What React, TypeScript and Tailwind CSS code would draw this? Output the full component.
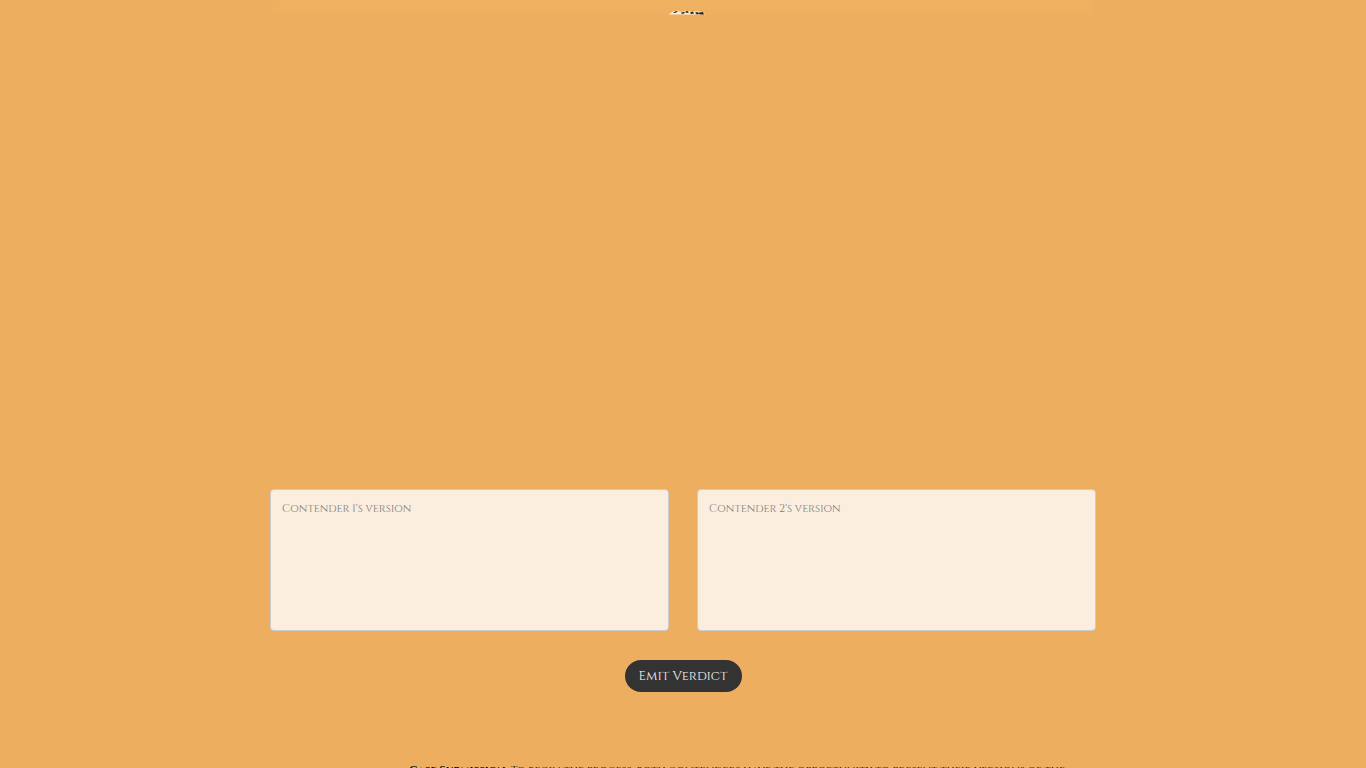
import React from "react";

const contenders = [1, 2];

function Banner() {
  return (
    <div className="flex h-[14px] w-full max-w-[820px] justify-center self-center bg-[#efb060]">
      <svg className="ml-2 h-[15px] w-9 shrink-0" viewBox="0 0 36 15" aria-hidden="true">
        <path d="M0 14 L4 11.5 L8 10.6 L12 12 L17 10.6 L22 11.6 L28 11.2 L34 12 L36 14.5 L0 14.5 Z" fill="#f6ead7" />
        <path d="M4 13 L7 11 L9 11.5 L6 13 Z M12 12.8 L15 11.8 L16 13 L13 14 Z M16 12 L18 10.8 L20 12.2 L18 13 Z M21 12.6 L24 11.6 L25 13.4 L22 14 Z M26 12.8 L28 12 L31 13.4 L28 14.4 Z M30 12.6 L34 12 L35 14.4 L31 14.4 Z" fill="#30271f" />
      </svg>
    </div>
  );
}

export default function App() {
  return (
    <div className="h-screen overflow-hidden bg-[#eeae60] font-['Cinzel','Liberation_Serif',serif] text-[#333333]">
      <main className="mx-auto flex w-full max-w-[826px] flex-col">
        <Banner />
        <form className="mt-[475px] flex flex-col items-center" onSubmit={(e) => e.preventDefault()}>
          <div className="grid w-full grid-cols-2 gap-7">
            {contenders.map((n) => (
              <textarea
                key={n}
                aria-label={`Contender ${n}'s version`}
                placeholder={`Contender ${n}'s version`}
                className="block h-[142px] w-full resize-none rounded-[4px] border border-[#cccccc] bg-[#fbeedf] px-[11px] py-[9px] text-[11px] leading-5 outline-none placeholder:text-[#7c7972]"
              />
            ))}
          </div>
          <button
            type="submit"
            className="mt-[29px] h-8 w-[117px] whitespace-nowrap rounded-2xl bg-[#333333] text-[13px] leading-8 text-[#f5f5f5]"
          >
            Emit Verdict
          </button>
        </form>
        <ol className="mt-[69px] pl-[139px] text-[11px] leading-5 text-black">
          <li>
            <strong>Case Submission:</strong> To begin the process, both contenders have the opportunity to present their versions of the
          </li>
        </ol>
      </main>
    </div>
  );
}
